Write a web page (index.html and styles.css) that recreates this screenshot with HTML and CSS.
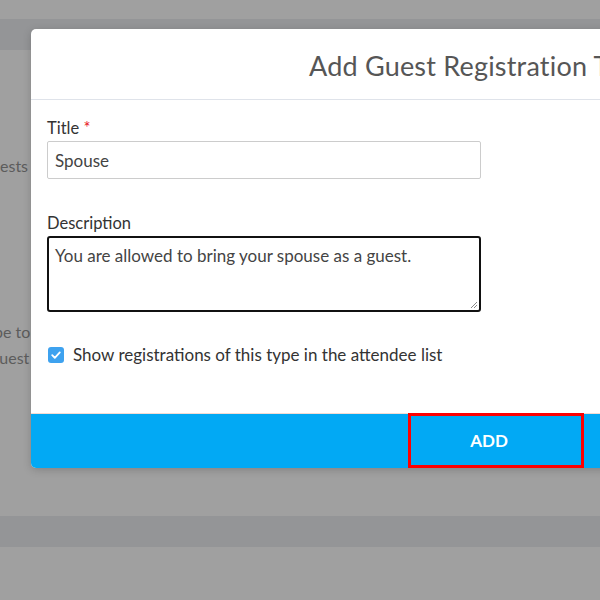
FILE: index.html
```html
<!DOCTYPE html>
<html>
<head>
<meta charset="utf-8">
<link rel="stylesheet" href="styles.css">
</head>
<body>
<div class="page">
  <div class="gap-top"></div>
  <div class="band"></div>
  <div class="content">
    <div class="bg-text t1">ests</div>
    <div class="bg-text t2">be to</div>
    <div class="bg-text t3">guest</div>
  </div>
  <div class="band"></div>
  <div class="rest"></div>
</div>

<div class="modal">
  <div class="modal-header">
    <h2 class="modal-title">Add Guest Registration Type</h2>
  </div>
  <div class="modal-body">
    <label class="field-label">Title <span class="req">*</span></label>
    <div class="input">Spouse</div>
    <label class="field-label desc-label">Description</label>
    <div class="textarea">You are allowed to bring your spouse as a guest.
      <svg class="grip" width="8" height="8" viewBox="0 0 8 8"><path d="M7 1 L1 7 M7 4 L4 7" stroke="#888" stroke-width="1"/></svg>
    </div>
    <div class="check-row">
      <span class="checkbox">
        <svg width="12" height="12" viewBox="0 0 12 12"><path d="M2.2 6.2 L4.8 8.8 L9.8 3.4" fill="none" stroke="#fff" stroke-width="1.8" stroke-linecap="round" stroke-linejoin="round"/></svg>
      </span>
      <span class="check-label">Show registrations of this type in the attendee list</span>
    </div>
  </div>
  <div class="modal-footer">
    <button class="add-btn">ADD</button>
  </div>
</div>
</body>
</html>
```

FILE: styles.css
```css
html, body {
  margin: 0;
  padding: 0;
}
body {
  background: #a0a0a0;
  font-family: Lato, "Open Sans", sans-serif;
  width: 600px;
  height: 600px;
  overflow: hidden;
  position: relative;
}
.page {
  display: flex;
  flex-direction: column;
}
.gap-top { height: 19px; }
.band { height: 31px; background: #949597; }
.content {
  height: 466px;
  display: flex;
  flex-direction: column;
}
.bg-text {
  color: #5c5c5c;
  font-size: 16px;
  line-height: 20px;
}
.t1 { margin-top: 106px; }
.t2 { margin-top: 146px; margin-left: -6px; }
.t3 { margin-top: 6px; margin-left: -9px; }
.rest { flex: 1; }

.modal {
  position: absolute;
  left: 31px;
  top: 29px;
  width: 640px;
  height: 439px;
  background: #fff;
  border-radius: 5px;
  box-shadow: 0 2px 8px rgba(0,0,0,0.18);
  display: flex;
  flex-direction: column;
  overflow: hidden;
}
.modal-header {
  height: 71px;
  border-bottom: 1px solid #dfe3ea;
  display: flex;
  align-items: center;
  padding-left: 278px;
  box-sizing: border-box;
}
.modal-title {
  margin: 0;
  font-weight: 400;
  font-size: 27px;
  color: #565656;
  white-space: nowrap;
  letter-spacing: 0.2px;
  padding-top: 2px;
}
.modal-body {
  flex: 1;
  padding: 18px 0 0 16px;
  display: flex;
  flex-direction: column;
  align-items: flex-start;
}
.field-label {
  font-size: 16.5px;
  color: #333;
  line-height: 20px;
  margin-bottom: 3px;
}
.req { color: #e8202a; }
.desc-label { margin-top: 34px; }
.input {
  width: 434px;
  height: 38px;
  box-sizing: border-box;
  border: 1px solid #ccc;
  border-radius: 2px;
  padding: 0 7px;
  font-size: 17px;
  color: #444;
  line-height: 37px;
}
.textarea {
  position: relative;
  width: 434px;
  height: 76px;
  box-sizing: border-box;
  border: 2px solid #111;
  border-radius: 3px;
  padding: 6px 6px;
  font-size: 17px;
  color: #444;
  line-height: 23px;
}
.grip {
  position: absolute;
  right: 1px;
  bottom: 1px;
}
.check-row {
  margin-top: 32px;
  display: flex;
  align-items: center;
  margin-left: 1px;
}
.checkbox {
  width: 16px;
  height: 16px;
  border-radius: 3px;
  background: #3ea2ef;
  display: flex;
  align-items: center;
  justify-content: center;
}
.check-label {
  margin-left: 9px;
  font-size: 17px;
  color: #333;
}
.modal-footer {
  height: 55px;
  background: #02a9f4;
  border-top: 1px solid #f3dcd4;
  box-sizing: border-box;
  display: flex;
  padding-left: 377px;
}
.add-btn {
  width: 176px;
  height: 55px;
  margin-top: -1px;
  background: transparent;
  border: 3px solid #ff0000;
  color: #fff;
  font-family: Lato, "Open Sans", sans-serif;
  font-weight: 700;
  font-size: 17px;
  padding: 0 14px 0 0;
}
```
